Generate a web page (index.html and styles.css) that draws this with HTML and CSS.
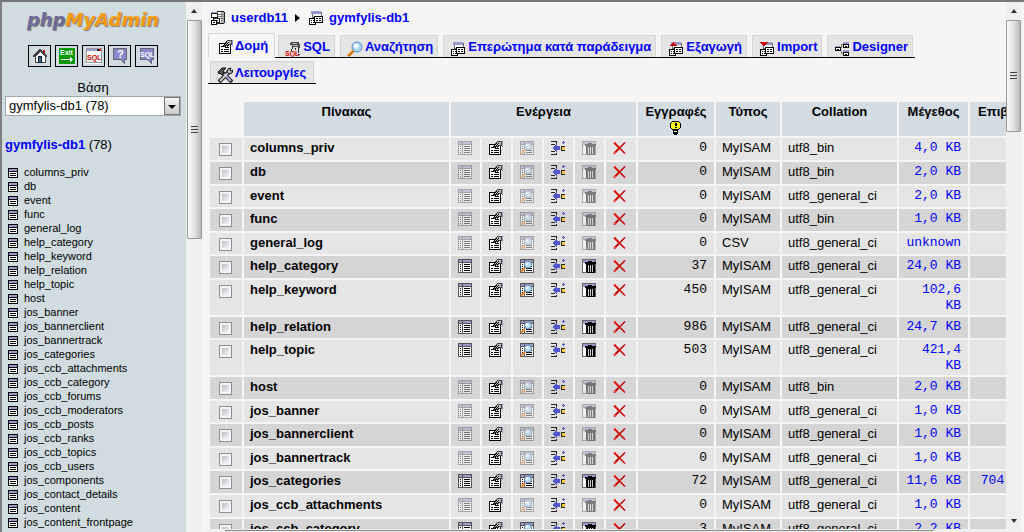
FILE: index.html
```html
<!DOCTYPE html>
<html lang="el">
<head>
<meta charset="utf-8">
<title>phpMyAdmin</title>
<link rel="stylesheet" href="styles.css">
</head>
<body>
<svg class="sprite" aria-hidden="true">
  <symbol id="i-server" viewBox="0 0 16 16">
    <path fill="#fff" stroke="#222" d="M6.500 2.500l2-1h5l1 1v10l-1 1h-7z"/><path fill="#aaa" d="M11 2h3v11h-3z"/><path stroke="#777" d="M8 4.500h5M8 6.500h5M8 8.500h5"/>
    <path fill="#99c" d="M1 2h7v2H1z"/><path fill="#fff" stroke="#222" d="M1.500 3.500h6v4h-6zM3.500 8.500h6v4h-6z"/><path fill="#fff" stroke="#000" d="M1.500 10.500h5v4h-5z"/><path stroke="#000" d="M3 12.500h2M5 10.500h3"/>
  </symbol>
  <symbol id="i-db" viewBox="0 0 16 16">
    <path fill="#fff" stroke="#667" d="M4.500 2.500h9v5h-9z"/><path fill="#99c" d="M3 1h10v3H3z"/>
    <path fill="#fff" stroke="#000" d="M1.500 8.500h6v6h-6z"/><path stroke="#000" d="M3 10.500h1M5 10.500h2M3 12.500h1M5 12.500h2"/>
    <path fill="#fff" stroke="#000" d="M6.500 6.500h8v6h-8z"/><path stroke="#000" d="M8 8.500h2M11 8.500h2M8 10.500h2M11 10.500h2"/>
  </symbol>
  <symbol id="i-export" viewBox="0 0 16 16"><use href="#i-db"/><path fill="#c00" d="M5 1h1v1h1v1h1v1h1v1H2V4h1V3h1V2h1z"/></symbol>
  <symbol id="i-import" viewBox="0 0 16 16"><use href="#i-db"/><path fill="#c00" d="M1 1h8v1H8v1H7v1H6v1H4V4H3V3H2V2H1z"/></symbol>
  <symbol id="i-designer" viewBox="0 0 16 16">
    <path fill="#99c" d="M9 1h6v2H9zM9 9h6v2H9zM1 5h5v2H1z"/><path fill="#fff" stroke="#000" d="M9.500 3.500h5v3h-5zM9.500 11.500h5v3h-5zM1.500 6.500h5v3h-5z"/><path stroke="#000" d="M11 5.500h2M11 13.500h2M3 8.500h2"/><path fill="none" stroke="#777" d="M9 3.500H7.500v3M7.500 10v2.500H9"/>
  </symbol>
  <symbol id="i-browse" viewBox="0 0 16 16">
    <path fill="#fff" stroke="#555" d="M1.500 1.500h13v13h-13z"/><path fill="#99c" d="M2 2h12v3H2z"/><path stroke="#555" d="M5.500 2v12M2 4.500h12"/>
    <path stroke="#000" d="M3 6.500h1M3 8.500h1M3 10.500h1M3 12.500h1M7 6.500h6M7 8.500h6M7 10.500h6M7 12.500h6"/>
  </symbol>
  <symbol id="i-props" viewBox="0 0 16 16">
    <path fill="#fff" stroke="#000" d="M1.500 4.500h11v10h-11z"/><path stroke="#000" d="M3 7.500h2M7 8.500h4M3 10.500h2M6 10.500h5M3 12.500h2M6 12.500h5"/>
    <path fill="#bbb" stroke="#444" d="M9.500 1.500h4v4h-2l-2 2-1-1-2 1 0-2z"/><path stroke="#000" stroke-dasharray="1 1" d="M6 5.500h5M7 4.500h4M8 3.500h3M5 6.500h5M5 7.500h3"/><path fill="#99c" d="M14 1h1v6h-1z"/>
  </symbol>
  <symbol id="i-glass" viewBox="0 0 16 16">
    <g shape-rendering="auto"><path stroke="#c60" stroke-width="3" d="M1 15l6-6"/><path stroke="#fb4" stroke-width="1" d="M1 14l5-5"/><circle cx="10" cy="6" r="5" fill="#a9d7f5" stroke="#5b8fc8"/><circle cx="9" cy="5" r="2.500" fill="#f0faff"/></g>
  </symbol>
  <symbol id="i-select" viewBox="0 0 16 16"><use href="#i-browse"/><g shape-rendering="auto"><path stroke="#e8862a" stroke-width="2" d="M2 14l4-4"/><circle cx="9" cy="6.500" r="3.500" fill="#b9dcf5" stroke="#668bc0"/><circle cx="8" cy="5.500" r="1.500" fill="#f4fbff"/></g></symbol>
  <symbol id="i-insert" viewBox="0 0 16 16">
    <path fill="none" stroke="#222" d="M1 1.500h5.500v2M1 4.500h4M1 11.500h4M1 14.500h5.500v-2"/><path fill="#55c" d="M2 8h1V7h1V6h1V5h1V4h1v2h3v4H7v2H6v-1H5v-1H4V9H3V8z"/><path stroke="#55c" d="M13.500 1v3M12 2.500h3"/><path fill="#fc3" d="M12 6h3v4h-3z"/><path fill="none" stroke="#222" d="M15 6.500h-3.500v4H15"/>
  </symbol>
  <symbol id="i-empty" viewBox="0 0 16 16">
    <path fill="#fff" stroke="#666" d="M1.500 1.500h13v13h-13z"/><path fill="#99c" d="M2 2h12v3H2z"/><path fill="#000" d="M7 3h4v1h4v2H4V4h3zM5 6h9v9H6v-1H5z"/><path stroke="#ccc" d="M7.500 7v7M9.500 7v7M11.500 7v7"/>
  </symbol>
  <symbol id="i-drop" viewBox="0 0 16 16">
    <g shape-rendering="auto" fill="none"><path stroke="#d11" stroke-width="2" d="M2 2.500l5.500 5.500"/><path stroke="#c00" stroke-width="1.500" d="M7 7.500l6 6"/><path stroke="#c00" stroke-width="2" d="M2 13.500L7.500 8"/><path stroke="#b00" stroke-width="1.500" d="M7 8.500l6-6"/></g><path fill="#f54" d="M2 2h2v1H2zM2 12h2v1H2z"/>
  </symbol>
  <symbol id="i-table" viewBox="0 0 10 10"><path fill="#fff" stroke="#000" d="M.5.5h9v9h-9z"/><path fill="#99c" d="M1 1h8v2H1z"/><path stroke="#000" d="M1 3.500h8M2 5.500h6M2 7.500h6"/></symbol>
  <symbol id="i-bulb" viewBox="0 0 16 16"><path fill="#ff0" stroke="#000" d="M4.500 1.500h6l2 2v4l-2 2h-6l-2-2v-4z"/><path d="M7 3h2v3H7zM7 7h2v1H7z"/><path fill="#fff" stroke="#000" d="M5.500 10.500h4v3h-4z"/><path stroke="#000" d="M5 12.500h5M6 14.500h3"/></symbol>
  <symbol id="i-tools" viewBox="0 0 16 16"><g shape-rendering="auto"><path stroke="#222" stroke-width="4" d="M6 6l9 9M2 15L12 5"/><path stroke="#aad" stroke-width="2" d="M7 7l7 7"/><path stroke="#ccc" stroke-width="2" d="M3 14l9-9"/><path fill="#555" stroke="#111" d="M1 5l4-4h4L6 4l1 2-2 2-2-2-1 1z"/><path fill="#bbb" stroke="#111" d="M10 5l1-3 3-1-1 2 1 1 2-1-1 3-3 1z"/></g></symbol>
  <symbol id="i-home" viewBox="0 0 16 16"><path fill="#fff" stroke="#444" d="M3.500 8.500l5-5 5 5v6h-10z"/><path fill="#c00" d="M11 2h2v4h-2z"/><path fill="none" stroke="#444" stroke-width="2" d="M1 9l7-7 7 7"/><path fill="#468" stroke="#123" d="M6.500 8.500h3v6h-3z"/></symbol>
</svg>

<div class="frames">
  <aside class="side">
    <a class="logo" href="#"><span>php</span>MyAdmin</a>
    <nav class="quick" aria-label="phpMyAdmin">
      <a href="#" aria-label="Home"><svg><use href="#i-home"/></svg></a>
      <a href="#" aria-label="Exit"><svg viewBox="0 0 16 16"><path fill="#090" d="M0 0h16v16H0z"/><text class="small" x="1" y="7" fill="#fff">Exit</text><path fill="#fff" d="M2 11h9V9h1v1h1v1h1v1h-1v1h-1v1h-1v-2H2z"/></svg></a>
      <a href="#" aria-label="SQL"><svg viewBox="0 0 16 16"><path fill="#fff" d="M0 0h16v16H0z"/><path fill="#223" d="M0 0h16v3H0z"/><path fill="#99c" d="M1 1h10v2H1z"/><path fill="#c00" d="M13 1h2v2h-2z"/><path fill="none" stroke="#999" d="M.5.500h15v14H.5z"/><text class="small" x="1" y="12" fill="#c00">SQL</text></svg></a>
      <a href="#" aria-label="Help"><svg viewBox="0 0 16 16"><path fill="#88c" stroke="#667" d="M1.500.5h13v11h-2v4l-4-4h-7z"/><text class="mark" x="5" y="10" fill="#fff">?</text></svg></a>
      <a href="#" aria-label="SQL help"><svg viewBox="0 0 16 16"><path fill="#88c" stroke="#667" d="M1.500.5h13v11h-2v4l-4-4h-7z"/><text class="small" x="1" y="9" fill="#fff">SQL</text></svg></a>
    </nav>
    <label class="base-label" for="base">Βάση</label>
    <div class="picker">
      <select id="base"><option>gymfylis-db1 (78)</option></select>
      <span class="picker-arrow"></span>
    </div>
    <p class="current"><a href="#">gymfylis-db1</a> (78)</p>
    <ul class="tables" id="tables"></ul>
  </aside>
  <div class="vbar"><i class="up"></i><div class="thumb thumb-side"><i class="grip"></i></div></div>
  <div class="content">
    <main class="main">
      <div class="crumbs">
        <svg class="icon"><use href="#i-server"/></svg><a href="#">userdb11</a><i class="arrow"></i><svg class="icon"><use href="#i-db"/></svg><a href="#">gymfylis-db1</a>
      </div>
      <ul class="tabs">
        <li class="active"><a href="#"><svg class="icon"><use href="#i-props"/></svg>Δομή</a></li>
        <li><a href="#"><svg class="icon" viewBox="0 0 16 16"><path fill="#444" d="M6 1h8v2h1v4h-2V6H7V4H5V2h1z"/><path stroke="#bbb" d="M7 2.500h5M8 4.500h5"/><path stroke="#222" d="M8 6l-2 4M10 7v2M13 7l1 5M13 13h2"/><text class="small" x="0" y="15" fill="#d00">SQL</text></svg>SQL</a></li>
        <li><a href="#"><svg class="icon"><use href="#i-glass"/></svg>Αναζήτηση</a></li>
        <li><a href="#"><svg class="icon"><use href="#i-db"/></svg>Επερώτημα κατά παράδειγμα</a></li>
        <li><a href="#"><svg class="icon"><use href="#i-export"/></svg>Εξαγωγή</a></li>
        <li><a href="#"><svg class="icon"><use href="#i-import"/></svg>Import</a></li>
        <li><a href="#"><svg class="icon"><use href="#i-designer"/></svg>Designer</a></li>
      </ul>
      <ul class="tabs tabs-second">
        <li><a href="#"><svg class="icon"><use href="#i-tools"/></svg>Λειτουργίες</a></li>
      </ul>
      <table class="data">
        <colgroup><col class="c-check"><col class="c-name"><col class="c-act" span="5"><col class="c-last"><col class="c-rows"><col class="c-type"><col class="c-coll"><col class="c-size"><col class="c-over"></colgroup>
        <thead><tr><td></td><th>Πίνακας</th><th colspan="6">Ενέργεια</th><th>Εγγραφές<svg class="icon"><use href="#i-bulb"/></svg></th><th>Τύπος</th><th>Collation</th><th>Μέγεθος</th><th>Επιβάρυνση</th></tr></thead>
        <tbody id="rows"></tbody>
      </table>
    </main>
    <div class="hbar"><div class="hthumb"></div></div>
  </div>
  <div class="vbar vbar-main"><i class="up"></i><div class="thumb thumb-main"><i class="grip"></i></div><i class="down"></i></div>
</div>
<script src="app.js"></script>
</body>
</html>
```
FILE: styles.css
```css
* { box-sizing: border-box; }
body {
  margin: 0;
  height: 100vh;
  overflow: hidden;
  background: #f5f5f5;
  color: #000;
  font: 13px/16px "Liberation Sans", Arial, sans-serif;
}
a { color: #00f; text-decoration: none; font-weight: bold; }
ul { list-style: none; margin: 0; padding: 0; }
.sprite { position: absolute; width: 0; height: 0; }
svg { display: block; width: 16px; height: 16px; shape-rendering: crispEdges; }
.icon { flex: none; }
.small { font: bold 7px "Liberation Sans", sans-serif; }
.mark { font: bold 11px "Liberation Sans", sans-serif; }

.frames {
  display: flex;
  height: 100vh;
  padding-right: 3px;
  border-top: 2px solid #777;
  border-left: 2px solid #808080;
}

/* navigation frame */
.side {
  flex: none;
  width: 184px;
  padding: 6px 5px 0 3px;
  overflow: hidden;
  background: #d0dce0;
}
.logo {
  display: block;
  height: 24px;
  text-align: center;
  color: #f89c0e;
  font: italic bold 18px/24px "DejaVu Sans", sans-serif;
  text-shadow: 1px 1px 1px #777;
}
.logo span { color: #6c6c9c; }
.quick {
  display: flex;
  justify-content: space-between;
  width: 130px;
  margin: 13px auto 0;
}
.quick a { padding: 2px; border: 1px solid #000; width: 23px; height: 22px; }
.quick svg { margin-left: 1px; }
.base-label { display: block; margin-top: 13px; text-align: center; }
.picker { position: relative; width: 176px; }
.picker select {
  display: block;
  width: 100%;
  height: 20px;
  padding: 0 3px;
  appearance: none;
  border: 1px solid #a0a8b0;
  border-radius: 0;
  background: #fff;
  color: #000;
  font: inherit;
}
.picker-arrow {
  position: absolute;
  top: 1px;
  right: 1px;
  width: 16px;
  height: 18px;
  border: 1px solid #777;
  background: linear-gradient(#f4f4f4, #ccc);
  pointer-events: none;
}
.picker-arrow::after {
  content: "";
  display: block;
  margin: 7px 3px;
  border: 4px solid transparent;
  border-top-color: #000;
  border-bottom: 0;
}
.current { margin: 21px 0 12px; }
.tables { padding-left: 3px; font-size: 11px; line-height: 14px; }
.tables li { display: flex; align-items: center; gap: 6px; white-space: nowrap; }
.tables svg { width: 10px; height: 10px; margin-top: 2px; }

/* scroll bars */
.vbar {
  display: flex;
  flex-direction: column;
  flex: none;
  width: 16px;
  background: #f0f0f0;
}
.vbar-main { width: 15px; }
.up, .down { flex: none; width: 6px; border: 3px solid transparent; }
.up { margin: 5px auto 7px; border-top: 0; border-bottom: 4px solid #333; height: 6px; }
.down { margin: auto auto 9px; border-bottom: 0; border-top: 4px solid #333; height: 4px; }
.thumb {
  display: flex;
  align-items: center;
  justify-content: center;
  flex: none;
  margin-left: 1px;
  border: 1px solid #979797;
  border-radius: 1px;
  background: linear-gradient(90deg, #fafafa, #e2e2e4 50%, #b8b8bd);
}
.thumb-side { height: 219px; }
.thumb-main { height: 112px; margin-left: 0; }
.grip { width: 7px; height: 8px; background: repeating-linear-gradient(#444 0 1px, #ddd 1px 2px, transparent 2px 3px); }

/* content frame */
.content {
  display: flex;
  flex: 1;
  flex-direction: column;
  min-width: 0;
  margin-left: 2px;
}
.main { flex: 1; min-height: 0; overflow: hidden; padding: 8px 0 0 4px; }
.crumbs { display: flex; align-items: center; height: 16px; margin-left: 2px; }
.crumbs a { margin-left: 5px; }
.arrow { margin: 0 8px 0 7px; border: 4px solid transparent; border-left: 5px solid #000; border-right: 0; }
.tabs { display: flex; align-items: flex-end; white-space: nowrap; margin-top: 7px; }
.tabs li { padding: 0 2px 0 3px; border-bottom: 1px solid #000; }
.tabs a {
  display: flex;
  align-items: center;
  height: 22px;
  padding: 1px 4px 0 6px;
  border: 1px solid #d5d5d5;
  border-width: 1px 1px 0;
  background: #e5e5e5;
}
.tabs .icon { margin: 4px 2px 0 0; }
.tabs .active { padding: 0; border-color: #f5f5f5; }
.tabs .active a { height: 24px; padding: 0 6px 0 9px; background: #f5f5f5; }
.tabs .active .icon { margin: 2px 1px 0 0; }
.tabs-second { width: 108px; margin-top: 3px; }
.tabs-second li { width: 108px; padding-left: 2px; }

.data { width: 858px; margin-top: 16px; table-layout: fixed; border-spacing: 2px; }
.c-check { width: 32px; }
.c-name { width: 205px; }
.c-act { width: 29px; }
.c-last { width: 30px; }
.c-rows { width: 76px; }
.c-type { width: 64px; }
.c-coll { width: 115px; }
.c-size { width: 69px; }
.c-over { width: 94px; }
.data th, .data td { padding: 2px 6px 1px; vertical-align: top; }
.data thead th { height: 34px; padding: 2px 0 0; background: #d3dce3; text-align: center; }
.data thead .icon { margin: 0 auto; }
.data tbody th { text-align: left; }
.data tbody tr { height: 22px; background: #e5e5e5; }
.data tbody tr:nth-child(even) { background: #d5d5d5; }
.data tbody tr:is(:nth-child(3), :nth-child(5), :nth-child(8), :nth-child(11), :nth-child(13)) { height: 21px; }
.data .check { padding: 5px 9px 0; }
.data .num { padding-right: 7px; font-family: "Liberation Mono", "Courier New", monospace; text-align: right; }
.data .num a { font-weight: normal; }
.data .over { padding-right: 13px; white-space: nowrap; }
.off { opacity: .45; }
.check input {
  display: block;
  width: 13px;
  height: 13px;
  margin: 0;
  appearance: none;
  border: 1px solid #8e8f8f;
  background: linear-gradient(135deg, #b8bfcb, #f6f6f6) content-box, #f4f4f4;
  padding: 2px;
}
.hbar { flex: none; height: 3px; padding: 1px 72px 0 21px; background: #f0f0f0; }
.hthumb { height: 2px; border-top: 1px solid #888; background: #eee; }
```
FILE: app.js
```js
const names = ["columns_priv", "db", "event", "func", "general_log", "help_category", "help_keyword", "help_relation", "help_topic", "host", "jos_banner", "jos_bannerclient", "jos_bannertrack", "jos_categories", "jos_ccb_attachments", "jos_ccb_category", "jos_ccb_forums", "jos_ccb_moderators", "jos_ccb_posts", "jos_ccb_ranks", "jos_ccb_topics", "jos_ccb_users", "jos_components", "jos_contact_details", "jos_content", "jos_content_frontpage"];

// records, type, collation, size, overhead
const details = [
  [0, "MyISAM", "utf8_bin", "4,0 KB"],
  [0, "MyISAM", "utf8_bin", "2,0 KB"],
  [0, "MyISAM", "utf8_general_ci", "2,0 KB"],
  [0, "MyISAM", "utf8_bin", "1,0 KB"],
  [0, "CSV", "utf8_general_ci", "unknown"],
  [37, "MyISAM", "utf8_general_ci", "24,0 KB"],
  [450, "MyISAM", "utf8_general_ci", "102,6 KB"],
  [986, "MyISAM", "utf8_general_ci", "24,7 KB"],
  [503, "MyISAM", "utf8_general_ci", "421,4 KB"],
  [0, "MyISAM", "utf8_bin", "2,0 KB"],
  [0, "MyISAM", "utf8_general_ci", "1,0 KB"],
  [0, "MyISAM", "utf8_general_ci", "1,0 KB"],
  [0, "MyISAM", "utf8_general_ci", "1,0 KB"],
  [72, "MyISAM", "utf8_general_ci", "11,6 KB", "704 Bytes"],
  [0, "MyISAM", "utf8_general_ci", "1,0 KB"],
  [3, "MyISAM", "utf8_general_ci", "2,2 KB"]
];

const actions = ["browse", "props", "select", "insert", "empty", "drop"];
const needsRecords = ["browse", "select", "empty"];

document.getElementById("tables").innerHTML = names
  .map(name => `<li><svg><use href="#i-table"/></svg>${name}</li>`)
  .join("");

document.getElementById("rows").innerHTML = details.map(([count, type, collation, size, overhead = ""], i) => {
  const icons = actions.map(action => {
    const off = count === 0 && needsRecords.includes(action) ? ' class="off"' : "";
    return `<td class="act"><a href="#" aria-label="${action} ${names[i]}"><svg${off}><use href="#i-${action}"/></svg></a></td>`;
  }).join("");
  return `<tr><td class="check"><input type="checkbox" id="t${i}"></td><th><label for="t${i}">${names[i]}</label></th>${icons}
    <td class="num">${count}</td><td>${type}</td><td>${collation}</td>
    <td class="num"><a href="#">${size}</a></td><td class="num over"><a href="#">${overhead}</a></td></tr>`;
}).join("");
```
